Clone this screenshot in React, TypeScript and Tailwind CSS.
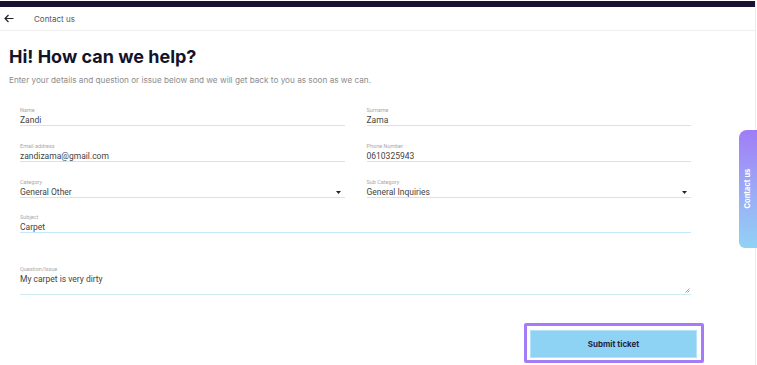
import React from 'react'

const sans = { fontFamily: 'Inter, "Noto Sans", sans-serif' }
const roboto = { fontFamily: 'Roboto, "Liberation Sans", sans-serif' }

function Caret() {
  return (
    <svg width="5" height="3" viewBox="0 0 5 3" className="absolute right-[4px] bottom-[3px]">
      <path d="M0 0 L5 0 L2.5 3 Z" fill="#1f2233" />
    </svg>
  )
}

function Field({ label, value, select }: { label: string; value: string; select?: boolean }) {
  return (
    <div className="relative border-b border-[#c6e8f8]" style={roboto}>
      <div className="text-[5.5px] leading-[8px] text-[#a9a9a9]">{label}</div>
      <div className="text-[8.5px] leading-[10px] pt-[1px] text-[#444]">{value}</div>
      {select && <Caret />}
    </div>
  )
}

export default function App() {
  return (
    <div className="relative w-[757px] h-[365px] overflow-hidden bg-white">
      <div className="w-[756px] h-full border-r border-[#ececec] bg-white">
        <div className="mt-[1px] h-[6px] bg-[#1a1033]" />

        {/* header */}
        <div className="h-[24px] flex items-center border-b border-[#efefef]">
          <svg width="10" height="9" viewBox="0 0 10 9" className="ml-[4px]">
            <path d="M9.5 4.5 H1 M4.5 1 L1 4.5 L4.5 8" stroke="#222" strokeWidth="1.2" fill="none" />
          </svg>
          <span className="ml-[20px] text-[8px] text-[#555]" style={sans}>
            Contact us
          </span>
        </div>

        <div className="pl-[9px]" style={sans}>
          <h1 className="mt-[15px] text-[18px] leading-[22px] font-bold text-[#15132b]">
            Hi! How can we help?
          </h1>
          <p className="mt-[6px] text-[8.2px] leading-[12px] text-[#8c8c8c]">
            Enter your details and question or issue below and we will get back to you as soon as we can.
          </p>
        </div>

        {/* form */}
        <div className="ml-[20px] w-[671px] mt-[20px]">
          <div className="grid grid-cols-2 gap-x-[22px] gap-y-[16px]">
            <Field label="Name" value="Zandi" />
            <Field label="Surname" value="Zama" />
            <Field label="Email address" value="zandizama@gmail.com" />
            <Field label="Phone Number" value="0610325943" />
            <Field label="Category" value="General Other" select />
            <Field label="Sub Category" value="General Inquiries" select />
          </div>
          <div className="mt-[15px]">
            <Field label="Subject" value="Carpet" />
          </div>
          <div className="relative mt-[32px] h-[30px] border-b border-[#cfe9f5]" style={roboto}>
            <div className="text-[5.5px] leading-[8px] text-[#a9a9a9]">Question/Issue</div>
            <div className="text-[8.5px] leading-[10px] pt-[1px] text-[#444]">My carpet is very dirty</div>
            <svg width="5" height="5" viewBox="0 0 5 5" className="absolute right-[1px] bottom-[1px]">
              <path d="M4.5 0.5 L0.5 4.5 M4.5 2.5 L2.5 4.5" stroke="#888" strokeWidth="0.8" />
            </svg>
          </div>
        </div>

        <div className="w-[704px] flex justify-end mt-[28px]">
          <div className="w-[180px] h-[40px] border-[3px] border-[#a57cf8] rounded-[2px] p-[3px] pr-[4px]">
            <button
              className="w-full h-full bg-[#8fd3f4] border border-[#b4e3f8] text-[8px] font-bold text-[#1f2544]"
              style={sans}
            >
              Submit ticket
            </button>
          </div>
        </div>
      </div>

      {/* side tab */}
      <div className="absolute right-0 top-[130px] w-[18px] h-[118px] rounded-tl-[8px] rounded-bl-[6px] bg-gradient-to-b from-[#a07cf6] to-[#90d2f5] flex items-center justify-center">
        <span
          className="block -rotate-90 whitespace-nowrap text-[7.5px] font-bold text-white"
          style={sans}
        >
          Contact us
        </span>
      </div>
    </div>
  )
}
